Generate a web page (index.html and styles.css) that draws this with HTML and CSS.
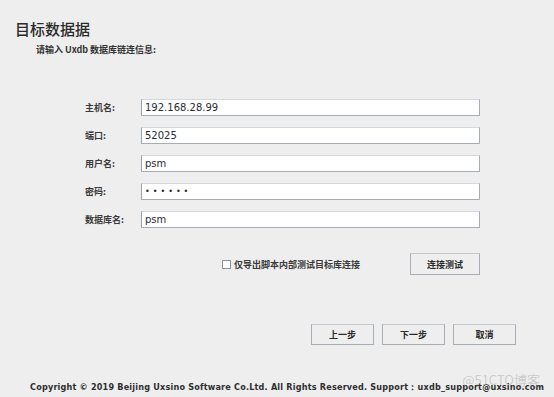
FILE: index.html
```html
<!DOCTYPE html>
<html>
<head>
  <meta charset="UTF-8">
  <title>目标数据据</title>
  <link rel="stylesheet" href="styles.css">
</head>
<body>
  <div class="window">
    <div class="header">
      <h1>目标数据据</h1>
      <p class="subtitle">请输入 Uxdb 数据库链连信息:</p>
    </div>

    <div class="form">
      <div class="form-row">
        <label for="host">主机名:</label>
        <input type="text" id="host" value="192.168.28.99">
      </div>
      <div class="form-row">
        <label for="port">端口:</label>
        <input type="text" id="port" value="52025">
      </div>
      <div class="form-row">
        <label for="user">用户名:</label>
        <input type="text" id="user" value="psm">
      </div>
      <div class="form-row">
        <label for="password">密码:</label>
        <input type="password" id="password" value="psmpsm">
      </div>
      <div class="form-row">
        <label for="dbname">数据库名:</label>
        <input type="text" id="dbname" value="psm">
      </div>
    </div>

    <div class="test-row">
      <label class="check-label">
        <input type="checkbox" id="scriptOnly">
        <span class="box"></span>
        仅导出脚本内部测试目标库连接
      </label>
      <button class="btn">连接测试</button>
    </div>

    <div class="nav-row">
      <button class="btn">上一步</button>
      <button class="btn">下一步</button>
      <button class="btn">取消</button>
    </div>

    <div class="footer">
      Copyright © 2019 Beijing Uxsino Software Co.Ltd. All Rights Reserved. Support：uxdb_support@uxsino.com
      <span class="watermark">@51CTO博客</span>
    </div>
  </div>
</body>
</html>
```

FILE: styles.css
```css
:root {
  --bg-color: #eeeeee;
  --text-color: #333333;
  --border-color: #a7adb5;
  --border-light: #d4d7db;
}

* {
  box-sizing: border-box;
  margin: 0;
  padding: 0;
}

body {
  width: 554px;
  height: 397px;
  overflow: hidden;
  background-color: var(--bg-color);
  color: var(--text-color);
  font-family: "Noto Sans CJK SC", "DejaVu Sans", sans-serif;
}

.window {
  position: relative;
  height: 397px;
  display: flex;
  flex-direction: column;
  border-bottom-left-radius: 10px;
  background-color: var(--bg-color);
}

.header {
  padding: 19px 0 0 15px;
}

h1 {
  font-size: 15px;
  font-weight: 500;
  line-height: 20px;
  color: #2a2a2a;
}

.subtitle {
  margin: 5px 0 0 21px;
  font-size: 9px;
  font-weight: 700;
  line-height: 12px;
}

.form {
  display: flex;
  flex-direction: column;
  gap: 11px;
  padding: 43px 0 0 85px;
}

.form-row {
  display: flex;
  align-items: center;
  height: 17px;
}

.form-row label {
  width: 56px;
  font-size: 9px;
  font-weight: 700;
  color: #3a3a3a;
}

.form-row input {
  width: 339px;
  height: 17px;
  padding: 0 3px;
  border: 1px solid var(--border-color);
  border-top-color: var(--border-light);
  border-left-color: #9aa2ab;
  background-color: #ffffff;
  color: #2b2b35;
  font-family: "DejaVu Sans", sans-serif;
  font-size: 10px;
  outline: none;
}

.form-row input[type="password"] {
  font-size: 8px;
  letter-spacing: 3px;
}

.test-row {
  display: flex;
  align-items: center;
  padding: 25px 74px 0 222px;
}

.check-label {
  display: flex;
  align-items: center;
  gap: 3px;
  font-size: 9px;
  font-weight: 700;
  color: #3a3a3a;
}

.check-label input {
  display: none;
}

.box {
  width: 9px;
  height: 9px;
  border: 1px solid #8d949c;
  background-color: #ffffff;
}

.btn {
  width: 63px;
  height: 21px;
  border: 1px solid var(--border-color);
  border-top-color: #c3c8ce;
  background-color: #eeeeee;
  color: #2a2a2a;
  font-family: "Noto Sans CJK SC", sans-serif;
  font-size: 9px;
  font-weight: 700;
}

.test-row .btn {
  width: 70px;
  height: 22px;
  margin-left: auto;
}

.nav-row {
  display: flex;
  gap: 8px;
  padding: 49px 0 0 311px;
}

.footer {
  margin-top: auto;
  padding: 0 0 4px 30px;
  font-family: "DejaVu Sans Condensed", "DejaVu Sans", sans-serif;
  font-size: 9px;
  font-weight: 700;
  letter-spacing: 0.2px;
  line-height: 12px;
  color: #2e2e2e;
  white-space: nowrap;
}

.watermark {
  position: absolute;
  right: 14px;
  bottom: 11px;
  font-family: "Noto Sans CJK SC", sans-serif;
  font-size: 13px;
  font-weight: 400;
  letter-spacing: 0;
  color: rgba(150, 150, 150, 0.4);
}
```
